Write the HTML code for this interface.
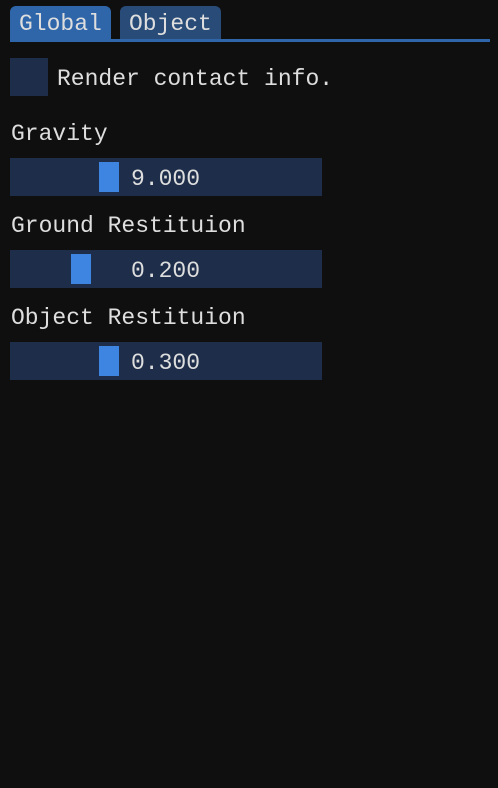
<!DOCTYPE html>
<html><head><style>
body{margin:0;width:498px;height:788px;background:#0f0f0f;position:relative;overflow:hidden;font-family:"Liberation Mono","DejaVu Sans Mono",monospace;font-size:23px;color:#dedede;}
.a{position:absolute;}
.t{position:absolute;line-height:24px;white-space:pre;letter-spacing:0px;}
.fr{position:absolute;background:#1e2e4a;}
.g{position:absolute;background:#3d85e0;}
</style></head><body>
<div class="a" style="left:10px;top:6px;width:101px;height:35px;background:#2f66aa;border-radius:6px 6px 0 0"></div>
<div class="a" style="left:120px;top:6px;width:101px;height:35px;background:#294b78;border-radius:6px 6px 0 0"></div>
<div class="a" style="left:10px;top:39px;width:480px;height:3px;background:#2f66aa"></div>
<div class="t" style="left:19px;top:12px">Global</div>
<div class="t" style="left:129px;top:12px">Object</div>

<div class="fr" style="left:10px;top:58px;width:38px;height:38px"></div>
<div class="t" style="left:57px;top:67px">Render contact info.</div>

<div class="t" style="left:11px;top:122px">Gravity</div>
<div class="fr" style="left:10px;top:158px;width:312px;height:38px"></div>
<div class="g" style="left:99px;top:162px;width:20px;height:30px"></div>
<div class="t" style="left:131px;top:167px">9.000</div>

<div class="t" style="left:11px;top:214px">Ground Restituion</div>
<div class="fr" style="left:10px;top:250px;width:312px;height:38px"></div>
<div class="g" style="left:71px;top:254px;width:20px;height:30px"></div>
<div class="t" style="left:131px;top:259px">0.200</div>

<div class="t" style="left:11px;top:306px">Object Restituion</div>
<div class="fr" style="left:10px;top:342px;width:312px;height:38px"></div>
<div class="g" style="left:99px;top:346px;width:20px;height:30px"></div>
<div class="t" style="left:131px;top:351px">0.300</div>
</body></html>
